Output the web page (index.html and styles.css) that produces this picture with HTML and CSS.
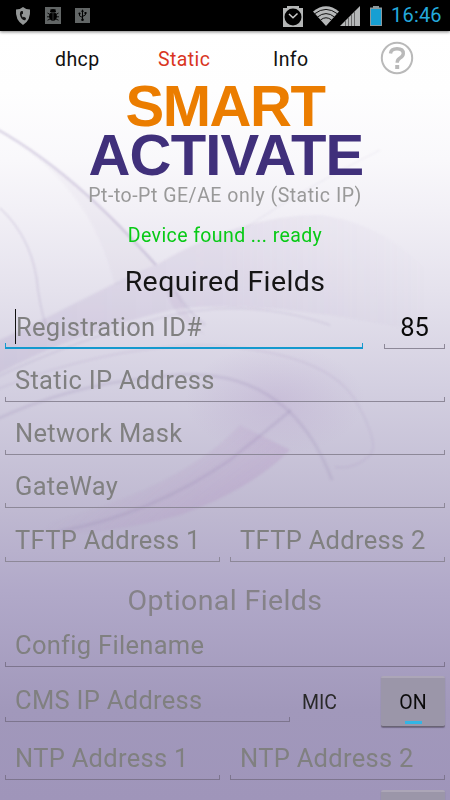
FILE: index.html
```html
<!DOCTYPE html>
<html lang="en">
<head>
  <meta charset="UTF-8">
  <meta name="viewport" content="width=device-width, initial-scale=1.0">
  <title>Smart Activate</title>
  <link rel="stylesheet" href="styles.css">
</head>
<body>
<div class="screen">
  <svg class="swirls" viewBox="0 0 450 800" aria-hidden="true">
    <defs>
      <linearGradient id="fade" x1="0" x2="1">
        <stop offset="0" stop-color="#9980b8" stop-opacity=".15"/>
        <stop offset=".5" stop-color="#9980b8" stop-opacity=".12"/>
        <stop offset=".95" stop-color="#9980b8" stop-opacity="0"/>
      </linearGradient>
      <linearGradient id="petal" gradientUnits="userSpaceOnUse" x1="150" y1="440" x2="215" y2="520">
        <stop offset="0" stop-color="#a878b8" stop-opacity="0"/>
        <stop offset="1" stop-color="#a878b8" stop-opacity=".2"/>
      </linearGradient>
      <radialGradient id="glow">
        <stop offset="0" stop-color="#a584bd" stop-opacity=".2"/>
        <stop offset="1" stop-color="#a584bd" stop-opacity="0"/>
      </radialGradient>
      <filter id="soft" x="-10%" y="-10%" width="120%" height="120%" color-interpolation-filters="sRGB"><feGaussianBlur stdDeviation="1.3"/></filter>
    </defs>
    <ellipse cx="275" cy="400" rx="90" ry="55" fill="url(#glow)"/>
    <g filter="url(#soft)">
      <path d="M-5 130C65 168 120 225 156 265L115 286C100 220 60 165 -5 130z" fill="#9980b8" opacity=".05"/>
      <path d="M-5 342C70 308 120 278 156 265Q240 215 320 215Q400 225 450 300L450 340Q300 300 180 308Q80 330 -5 375z" fill="url(#fade)"/>
      <path d="M165 290L178 292Q185 315 205 335Q175 320 165 290z" fill="#9c84b5" opacity=".1"/>
      <path d="M-5 534Q90 540 180 515Q250 490 290 450L240 425Q170 500 -5 534z" fill="url(#petal)"/>
    </g>
    <g fill="none" stroke="#8f7aae" filter="url(#soft)">
      <path d="M-5 128C65 167 120 225 156 265" stroke-width="2.500" opacity=".3"/>
      <path d="M170 282Q185 310 205 325" stroke-width="3" opacity=".12"/>
      <path d="M0 208Q34 240 38 290Q42 315 46 325" stroke-width="1.500" opacity=".22"/>
      <path d="M-5 378Q75 340 160 318T330 325" stroke-width="1.500" opacity=".16"/>
      <path d="M-5 390Q100 348 200 345Q330 350 358 405Q380 445 370 455Q355 470 335 467" stroke-width="2" opacity=".1"/>
      <path d="M-5 420Q70 385 150 378Q285 355 332 480" stroke-width="3" opacity=".17"/>
      <path d="M60 531Q150 515 230 460Q270 428 291 410" stroke-width="3" opacity=".17"/>
      <path d="M245 228Q310 185 380 150" stroke-width="1" opacity=".12"/>
    </g>
  </svg>

  <header class="status-bar">
    <div class="status-left">
      <svg width="16" height="18" viewBox="0 0 16 18"><path d="M8 0Q11 2.500 15 2.500Q16 13 8 18Q0 13 1 2.500Q5 2.500 8 0z" fill="#939696"/><path d="M6 4Q3.500 7 6.500 11.500Q8.500 14 10.500 13L11 11L8.800 9.800L7.800 10.500Q6.700 9 6.600 7.500L8 6.800V4.200z" fill="#111"/></svg>
      <svg width="16" height="17" viewBox="0 0 16 17"><path d="M0 0h16v17H0z" fill="#626666"/><ellipse cx="8" cy="9.300" rx="3.900" ry="4.700"/><path d="M5 5a3 3 0 0 1 6 0z"/><path d="M5.800 2.200l1 1.500M10.200 2.200l-1 1.500M5 7.500L2.500 6M11 7.500L13.500 6M5 9.800H2M11 9.800h3M5 12l-2.500 1.200M11 12l2.500 1.200" stroke="#000" stroke-width=".9"/><path d="M8 6v8M4.500 5.700h7" stroke="#626666" stroke-width=".5"/></svg>
      <svg width="15" height="15" viewBox="0 0 15 15"><path d="M0 0h15v15H0z" fill="#626666"/><path d="M7.500 2.500v9M7.500 9.500L4.500 7.800V5.500M7.500 8.500l3-1.700V5" fill="none" stroke="#000" stroke-width="1"/><path d="M7.500 1.300L6 3.700h3zM9.500 4h2v2h-2z"/><circle cx="4.500" cy="5.500" r="1.100"/><circle cx="7.500" cy="11.700" r="1.300"/></svg>
    </div>
    <div class="status-right">
      <svg class="alarm" width="20" height="21" viewBox="0 0 20 21"><path d="M0 2h4V0h12v2h4v19H0z" fill="#b4b6b6"/><circle cx="10" cy="11" r="8.500"/><path d="M6 8l4 3.800L14.500 7.500" fill="none" stroke="#ccc" stroke-width="1.500"/></svg>
      <svg class="wifi" width="26" height="20" viewBox="0 0 26 20"><path d="M0 5.500Q13-5 26 5.500L13 20z" fill="#b5b7b8"/><path d="M1.500 7.800Q13-1 24.500 7.800M4.500 11Q13 4.200 21.500 11M7.500 14Q13 9.500 18.500 14" fill="none" stroke="#111" stroke-width="1"/></svg>
      <svg class="signal" width="20" height="20" viewBox="0 0 20 20"><path d="M0 20L20 0V20z" fill="#b5b7b8"/><path d="M5.500 14v6M8.500 11v9M11.500 8v12M14.500 5v15" stroke="#555" stroke-width=".8"/></svg>
      <svg class="battery" width="12" height="20" viewBox="0 0 12 20"><path d="M3 0h6v1.500h3V20H0V1.500h3z" fill="#8d999d"/><path d="M1 3h10v16H1z" fill="#169fd3"/></svg>
      <span class="clock">16:46</span>
    </div>
  </header>

  <nav class="tabs">
    <a class="tab">dhcp</a>
    <a class="tab active">Static</a>
    <a class="tab">Info</a>
    <svg class="help" width="34" height="34" viewBox="0 0 34 34" fill="none" stroke="#b9b9b9"><circle cx="17" cy="17" r="15.200" stroke-width="2"/><path d="M10.500 12.500Q11 7.800 17 7.800Q23.300 7.800 23.300 12.500Q23.300 15 20 17Q17.200 18.600 17.200 21.800" stroke-width="3.400"/><path d="M15.200 24h4v4h-4z" fill="#b9b9b9" stroke="none"/></svg>
  </nav>

  <h1 class="logo"><span class="smart">SMART</span><span class="activate">ACTIVATE</span></h1>
  <p class="mode">Pt-to-Pt GE/AE only (Static IP)</p>
  <p class="device">Device found ... ready</p>

  <form class="fields">
    <h2 class="section">Required Fields</h2>
    <div class="row first">
      <label class="field focused"><span>Registration ID#</span></label>
      <label class="field port"><span>85</span></label>
    </div>
    <div class="row"><label class="field"><span>Static IP Address</span></label></div>
    <div class="row"><label class="field"><span>Network Mask</span></label></div>
    <div class="row"><label class="field"><span>GateWay</span></label></div>
    <div class="row tftp">
      <label class="field"><span>TFTP Address 1</span></label>
      <label class="field"><span>TFTP Address 2</span></label>
    </div>

    <h2 class="section optional">Optional Fields</h2>
    <div class="row config"><label class="field"><span>Config Filename</span></label></div>
    <div class="row cms">
      <label class="field"><span>CMS IP Address</span></label>
      <span class="mic">MIC</span>
      <button class="toggle" type="button">ON</button>
    </div>
    <div class="row ntp">
      <label class="field"><span>NTP Address 1</span></label>
      <label class="field"><span>NTP Address 2</span></label>
    </div>
    <div class="row last"><button class="toggle" type="button" aria-label="Toggle"></button></div>
  </form>
</div>
</body>
</html>
```

FILE: styles.css
```css
* {
  box-sizing: border-box;
}
body {
  margin: 0;
  font-family: Roboto, "Liberation Sans", sans-serif;
  background: #000;
}
h1, h2, p {
  margin: 0;
  font-weight: normal;
}
.screen {
  position: relative;
  width: 450px;
  height: 800px;
  overflow: hidden;
  background: linear-gradient(#fff 31px, #fefefe 90px, #f9f8fb 160px, #f2f0f6 210px, #e5e2ed 290px, #d1cddf 400px, #bfb9d1 510px, #b1a9c9 590px, #a198bb 710px, #9f95ba 800px);
}
/* decorative backdrop, sits under everything */
.swirls {
  position: absolute;
  top: 0;
  left: 0;
  width: 450px;
  height: 800px;
}
.status-bar, .tabs, .logo, .mode, .device, .fields {
  position: relative;
}
.status-bar {
  display: flex;
  justify-content: space-between;
  height: 31px;
  padding: 0 7px 0 15px;
  background: #000;
  box-shadow: 0 1px 3px rgba(0,0,0,0.5);
}
.status-left, .status-right {
  display: flex;
  align-items: center;
}
.status-left {
  gap: 14px;
}
.alarm {
  margin: 2px 10px 0 0;
}
.wifi {
  margin-right: 1px;
}
.signal {
  margin-right: 10px;
}
.battery {
  margin-right: 9px;
}
.clock {
  width: 52px;
  color: #24a9dc;
  font-size: 20px;
  line-height: 33px;
  letter-spacing: 0.2px;
  white-space: nowrap;
}
.tabs {
  display: flex;
  height: 53px;
  padding-left: 55px;
  font-size: 19.5px;
  line-height: 57px;
}
.tab {
  width: 103px;
  color: #111;
  letter-spacing: 0.4px;
}
.tab.active {
  width: 115px;
  color: #d9361f;
}
.tab:nth-child(3) {
  width: 107px;
}
.help {
  margin-top: 10px;
}
.logo {
  height: 98px;
  margin-top: -3px;
  margin-bottom: 3px;
  font: bold 58px/49px "Liberation Sans", Arial, sans-serif;
  text-align: center;
}
.logo span {
  display: block;
}
.smart {
  color: #eb7d00;
  letter-spacing: -1.4px;
}
.activate {
  padding-left: 2px;
  color: #40307b;
  letter-spacing: -0.8px;
}
.mode {
  height: 28px;
  color: #999;
  font-size: 19.5px;
  line-height: 28px;
  letter-spacing: 0.5px;
  text-align: center;
}
.device {
  height: 50px;
  color: #08ca16;
  font-size: 19.5px;
  line-height: 52px;
  letter-spacing: 0.4px;
  text-align: center;
}
.section {
  height: 43px;
  color: #151515;
  font-size: 28.5px;
  line-height: 44px;
  letter-spacing: 0.4px;
  text-align: center;
}
.section.optional {
  height: 53px;
  color: #858288;
  font-size: 28.5px;
  line-height: 77px;
  letter-spacing: 0.4px;
}
.row {
  display: flex;
  gap: 10px;
  height: 53px;
  padding: 0 5px;
  align-items: flex-end;
}
.row.first {
  gap: 21px;
  height: 46px;
}
.row.tftp {
  height: 54px;
}
.row.config {
  height: 52px;
}
.row.cms {
  gap: 0;
  height: 55px;
}
.row.ntp {
  height: 58px;
}
/* holo style underline with a small tick at both ends */
.field {
  --line: #8d8898;
  flex: 1;
  height: 41px;
  padding-left: 10px;
  color: #808080;
  font-size: 25.5px;
  line-height: 39px;
  letter-spacing: 0.3px;
  white-space: nowrap;
  border-bottom: 1px solid var(--line);
  background: linear-gradient(var(--line), var(--line)) left bottom / 1px 4px no-repeat,
    linear-gradient(var(--line), var(--line)) right bottom / 1px 4px no-repeat;
}
.field.focused {
  --line: #1499ce;
  flex: none;
  width: 358px;
  border-bottom-width: 2px;
}
.focused span {
  display: inline-block;
  height: 35px;
  margin-left: 1px;
  line-height: 36px;
  letter-spacing: 0.25px;
  box-shadow: -1px 0 #111;
}
.field.port {
  flex: none;
  width: 61px;
  padding: 0;
  color: #0a0a0a;
  letter-spacing: 0;
  text-align: center;
}
.cms .field, .ntp .field, .config .field {
  --line: #7d758e;
}
.cms .field {
  flex: none;
  width: 285px;
}
.mic {
  width: 91px;
  padding-left: 12px;
  color: #292929;
  font-size: 19.5px;
  line-height: 39px;
}
.toggle {
  flex: none;
  width: 64px;
  height: 51px;
  margin-bottom: -5px;
  padding: 0;
  color: #0b0b0b;
  font: 19.5px Roboto, sans-serif;
  border: 0;
  border-top: 2px solid #aca6b7;
  border-bottom: 1px solid #696474;
  border-radius: 2px;
  background: linear-gradient(#33b5e5, #33b5e5) center 43px / 17px 3px no-repeat, #9b96a9;
  box-shadow: 0 1px 1px rgba(70,60,85,0.5);
}
.row.last {
  height: 56px;
  justify-content: flex-end;
}
```
